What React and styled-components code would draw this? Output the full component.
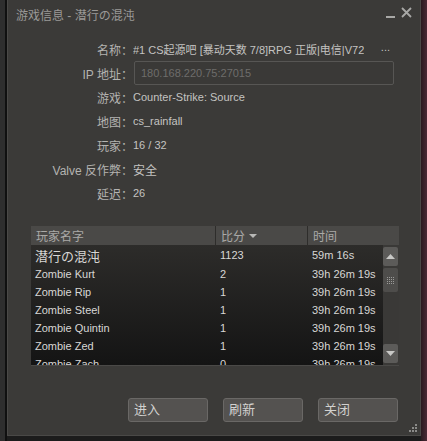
import React from 'react';
import styled, { createGlobalStyle } from 'styled-components';

const GlobalStyle = createGlobalStyle`
  html, body { margin: 0; padding: 0; background: #252524; overflow: hidden; }
  body { width: 427px; height: 441px; font-family: "Liberation Sans", "Noto Sans CJK SC", sans-serif; }
`;

const info = [
  { label: '名称：', value: '#1 CS起源吧 [暴动天数 7/8]RPG 正版|电信|V72', more: true, latin: true },
  { label: 'IP 地址：', value: '180.168.220.75:27015', input: true },
  { label: '游戏：', value: 'Counter-Strike: Source', latin: true },
  { label: '地图：', value: 'cs_rainfall', latin: true },
  { label: '玩家：', value: '16 / 32', latin: true },
  { label: 'Valve 反作弊：', value: '安全' },
  { label: '延迟：', value: '26', latin: true },
];

const players = [
  { name: '潜行の混沌', score: '1123', time: '59m 16s', big: true },
  { name: 'Zombie Kurt', score: '2', time: '39h 26m 19s' },
  { name: 'Zombie Rip', score: '1', time: '39h 26m 19s' },
  { name: 'Zombie Steel', score: '1', time: '39h 26m 19s' },
  { name: 'Zombie Quintin', score: '1', time: '39h 26m 19s' },
  { name: 'Zombie Zed', score: '1', time: '39h 26m 19s' },
  { name: 'Zombie Zach', score: '0', time: '39h 26m 19s' },
];

const App = () => {
  return (
    <>
      <GlobalStyle />
      <Desktop>
        <Window>
          <TitleBar>
            <Title>游戏信息 - 潜行の混沌</Title>
            <TitleButtons>
              <Minimize />
              <Close>
                <svg width="11" height="11" viewBox="0 0 11 11">
                  <path d="M1 1 L10 10 M10 1 L1 10" stroke="#a8a8a6" strokeWidth="1.8" />
                </svg>
              </Close>
            </TitleButtons>
          </TitleBar>

          <InfoGrid>
            {info.map(row => (
              <React.Fragment key={row.label}>
                <Label>{row.label}</Label>
                {row.input ? (
                  <InputBox>{row.value}</InputBox>
                ) : (
                  <Value latin={row.latin}>
                    <ValueText>{row.value}</ValueText>
                    {row.more && <More>...</More>}
                  </Value>
                )}
              </React.Fragment>
            ))}
          </InfoGrid>

          <Table>
            <Header>
              <HeadCell>玩家名字</HeadCell>
              <HeadCell divider>比分 <Caret /></HeadCell>
              <HeadCell divider>时间</HeadCell>
            </Header>
            <Body>
              <Rows>
                {players.map(p => (
                  <Row key={p.name}>
                    <Cell big={p.big}>{p.name}</Cell>
                    <Cell>{p.score}</Cell>
                    <Cell>{p.time}</Cell>
                  </Row>
                ))}
              </Rows>
              <Scrollbar>
                <ScrollButton>
                  <svg width="9" height="5" viewBox="0 0 9 5"><path d="M0 5 L4.5 0 L9 5 Z" fill="#c8c8c6" /></svg>
                </ScrollButton>
                <Thumb>
                  <svg width="7" height="7" viewBox="0 0 7 7">
                    {[0, 2, 4, 6].map(y => [0, 2, 4, 6].map(x => (
                      <rect key={x + '-' + y} x={x} y={y} width="1" height="1" fill="#9a9a98" />
                    )))}
                  </svg>
                </Thumb>
                <Track />
                <ScrollButton>
                  <svg width="9" height="5" viewBox="0 0 9 5"><path d="M0 0 L4.5 5 L9 0 Z" fill="#c8c8c6" /></svg>
                </ScrollButton>
              </Scrollbar>
            </Body>
          </Table>

          <Footer>
            <Button>进入</Button>
            <Button>刷新</Button>
            <Button>关闭</Button>
          </Footer>
          <Grip>
            <svg width="8" height="8" viewBox="0 0 8 8">
              <rect x="6" y="0" width="2" height="2" fill="#8a8a88" />
              <rect x="3" y="3" width="2" height="2" fill="#8a8a88" />
              <rect x="6" y="3" width="2" height="2" fill="#8a8a88" />
              <rect x="0" y="6" width="2" height="2" fill="#8a8a88" />
              <rect x="3" y="6" width="2" height="2" fill="#8a8a88" />
              <rect x="6" y="6" width="2" height="2" fill="#8a8a88" />
            </svg>
          </Grip>
        </Window>
      </Desktop>
    </>
  );
};
export default App;

const Desktop = styled.div`
  width: 427px;
  height: 441px;
  background: linear-gradient(90deg, #2e2e2e 0px, #2e2e2e 5px, #101010 5px, #101010 7px, transparent 7px),
    linear-gradient(90deg, transparent 421px, #2a1a20 421px, #4a2a36 427px), #1c1c1c;
  padding-left: 7px;
  box-sizing: border-box;
`;

const Window = styled.div`
  position: relative;
  width: 414px;
  height: 436px;
  background: #3b3a38;
  border: 1px solid #4a4947;
  border-top: none;
  box-sizing: border-box;
  display: flex;
  flex-direction: column;
`;

const TitleBar = styled.div`
  height: 29px;
  display: flex;
  align-items: center;
  justify-content: space-between;
  padding: 0 8px 0 8px;
`;

const Title = styled.div`
  color: #9a9997;
  font-size: 12px;
`;

const TitleButtons = styled.div`
  display: flex;
  align-items: center;
  gap: 6px;
  margin-top: -4px;
`;

const Minimize = styled.div`
  width: 9px;
  height: 2px;
  background: #a8a8a6;
  margin-top: 8px;
`;

const Close = styled.div`
  display: flex;
`;

const InfoGrid = styled.div`
  display: grid;
  grid-template-columns: 125px 261px;
  grid-auto-rows: 24px;
  align-items: center;
  margin-top: 8px;
`;

const Label = styled.div`
  text-align: right;
  color: #b4b3b1;
  font-size: 12px;
`;

const Value = styled.div`
  color: #c4c3c1;
  font-size: ${p => (p.latin ? '11px' : '12px')};
  display: flex;
  white-space: nowrap;
  min-width: 0;
`;

const ValueText = styled.span`
  overflow: hidden;
  max-width: 245px;
`;

const More = styled.span`
  margin-left: auto;
  margin-right: 4px;
`;

const InputBox = styled.div`
  height: 24px;
  box-sizing: border-box;
  border: 1px solid #575654;
  border-radius: 2px;
  background: #3a3937;
  color: #6e6d6b;
  font-size: 11px;
  line-height: 22px;
  padding-left: 6px;
  margin-left: 1px;
`;

const Table = styled.div`
  margin: 21px 0 0 23px;
  width: 368px;
  height: 139px;
  display: flex;
  flex-direction: column;
  overflow: hidden;
  border-bottom: 1px solid #4a4947;
`;

const Header = styled.div`
  height: 19px;
  flex: none;
  background: #4a4947;
  display: grid;
  grid-template-columns: 184px 92px 1fr;
  align-items: center;
`;

const HeadCell = styled.div`
  color: #aaa9a7;
  font-size: 12px;
  padding-left: 5px;
  border-left: ${p => (p.divider ? '1px solid #2e2d2b' : 'none')};
  height: 100%;
  display: flex;
  align-items: center;
  gap: 4px;
`;

const Caret = styled.span`
  width: 0;
  height: 0;
  border-left: 4px solid transparent;
  border-right: 4px solid transparent;
  border-top: 4px solid #b8b8b6;
`;

const Body = styled.div`
  flex: 1;
  display: flex;
  background: linear-gradient(180deg, #2d2c2a 0%, #141414 100%);
  overflow: hidden;
`;

const Rows = styled.div`
  flex: 1;
`;

const Row = styled.div`
  display: grid;
  grid-template-columns: 185px 92px 1fr;
  height: 18px;
  align-items: center;
  color: #d8d7d5;
  font-size: 11px;
  &:first-child {
    height: 20px;
  }
`;

const Cell = styled.div`
  padding-left: 4px;
  white-space: nowrap;
  overflow: hidden;
  font-size: ${p => (p.big ? '13px' : '11px')};
`;

const Scrollbar = styled.div`
  width: 16px;
  flex: none;
  background: #3a3937;
  display: flex;
  flex-direction: column;
  gap: 2px;
  padding: 2px 1px 2px 0;
  box-sizing: border-box;
`;

const ScrollButton = styled.div`
  height: 19px;
  flex: none;
  background: #5c5b59;
  border-radius: 2px;
  display: flex;
  align-items: center;
  justify-content: center;
`;

const Thumb = styled.div`
  height: 24px;
  flex: none;
  background: #4e4d4b;
  border-radius: 2px;
  display: flex;
  align-items: center;
  justify-content: center;
`;

const Track = styled.div`
  flex: 1;
`;

const Footer = styled.div`
  display: flex;
  justify-content: flex-end;
  gap: 15px;
  padding: 32px 22px 0 0;
`;

const Button = styled.div`
  width: 80px;
  height: 24px;
  box-sizing: border-box;
  background: #545250;
  border: 1px solid #6a6866;
  border-radius: 3px;
  color: #d2d1cf;
  font-size: 13px;
  line-height: 22px;
  padding-left: 5px;
`;

const Grip = styled.div`
  position: absolute;
  right: 3px;
  bottom: 3px;
  display: flex;
`;
